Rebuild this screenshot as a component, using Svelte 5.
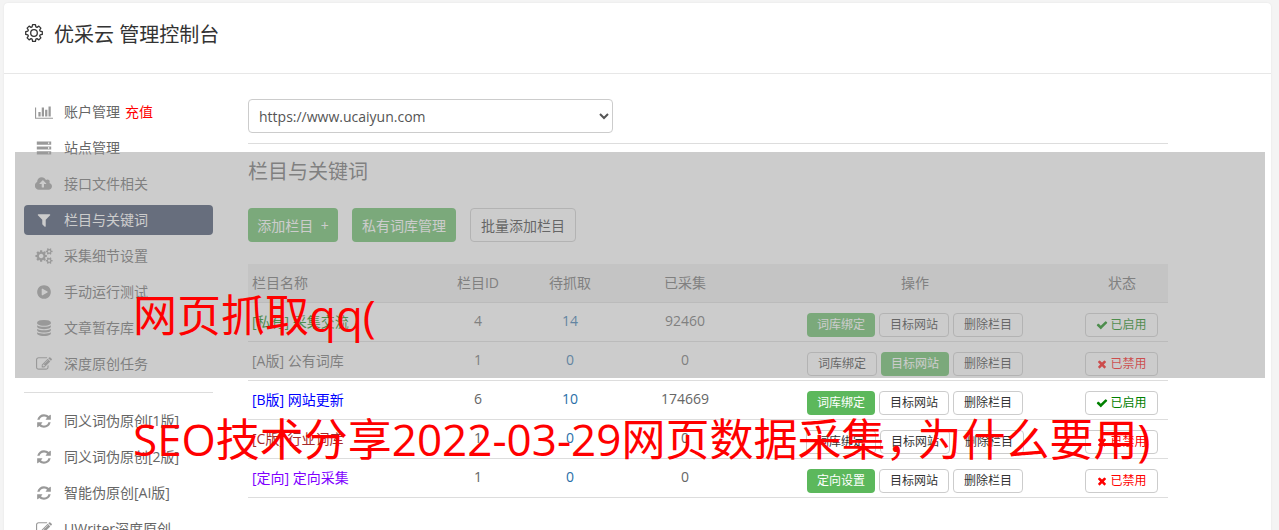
<script>
  const icons = {
    chart: { vb: '0 0 2048 1792', d: 'M640 896v512h-256v-512h256zm384-512v1024h-256v-1024h256zm1024 1152v128h-2048v-1280h128v1152h1920zm-640-896v768h-256v-768h256zm384-384v1152h-256v-1152h256z' },
    server: { vb: '0 0 20 20', d: 'M1 2h18v4H1zM15 3.2v1.6h1.6V3.2zM1 8h18v4H1zM15 9.2v1.6h1.6V9.2zM1 14h18v4H1zM15 15.2v1.6h1.6v-1.6z' },
    cloud: { vb: '0 0 1920 1792', d: 'M1216 864q0-14-9-23l-352-352q-9-9-23-9t-23 9l-351 351q-10 12-10 24 0 14 9 23t23 9h224v352q0 13 9.5 22.5t22.5 9.5h192q13 0 22.5-9.5t9.5-22.5v-352h224q13 0 22.5-9.5t9.5-22.5zm640 288q0 159-112.5 271.5t-271.5 112.5h-1088q-185 0-316.5-131.5t-131.5-316.5q0-130 70-240t188-165q-2-30-2-43 0-212 150-362t362-150q156 0 285.5 87t188.5 231q71-62 166-62 106 0 181 75t75 181q0 76-41 138 130 31 213.5 135.5t83.5 238.5z' },
    filter: { vb: '0 0 1792 1792', d: 'M1595 295q17 41-14 70l-493 493v742q0 42-39 59-13 5-25 5-27 0-45-19l-256-256q-19-19-19-45v-486l-493-493q-31-29-14-70 17-39 59-39h1280q42 0 59 39z' },
    cogs: { vb: '0 0 1920 1792', d: 'M896 896q0-106-75-181t-181-75-181 75-75 181 75 181 181 75 181-75 75-181zm768 512q0-52-38-90t-90-38-90 38-38 90q0 53 37.5 90.5t90.5 37.5 90.5-37.5 37.5-90.5zm0-1024q0-52-38-90t-90-38-90 38-38 90q0 53 37.5 90.5t90.5 37.5 90.5-37.5 37.5-90.5zm-384 421v185q0 10-7 19.5t-16 10.5l-155 24q-11 35-32 76 34 48 90 115 7 11 7 20 0 12-7 19-23 30-82.5 89.5t-78.5 59.5q-11 0-21-7l-115-90q-37 19-77 31-11 108-23 155-7 24-30 24h-186q-11 0-20-7.5t-10-17.5l-23-153q-34-10-75-31l-118 89q-7 7-20 7-11 0-21-8-144-133-144-160 0-9 7-19 10-14 41-53t47-61q-23-44-35-82l-152-24q-10-1-17-9.5t-7-19.5v-185q0-10 7-19.5t16-10.5l155-24q11-35 32-76-34-48-90-115-7-11-7-20 0-12 7-20 22-30 82-89t79-59q11 0 21 7l115 90q34-18 77-32 11-108 23-154 7-24 30-24h186q11 0 20 7.5t10 17.5l23 153q34 10 75 31l118-89q8-7 20-7 11 0 21 8 144 133 144 160 0 8-7 19-12 16-42 54t-45 60q23 48 34 82l152 23q10 2 17 10.5t7 19.5zm640 533v140q0 16-149 31-12 27-30 52 51 113 51 138 0 4-4 7-122 71-124 71-8 0-46-47t-52-68q-20 2-30 2t-30-2q-14 21-52 68t-46 47q-2 0-124-71-4-3-4-7 0-25 51-138-18-25-30-52-149-15-149-31v-140q0-16 149-31 13-29 30-52-51-113-51-138 0-4 4-7 4-2 35-20t59-34 30-16q8 0 46 46.5t52 67.5q20-2 30-2t30 2q51-71 92-112l6-2q4 0 124 70 4 3 4 7 0 25-51 138 17 23 30 52 149 15 149 31zm0-1024v140q0 16-149 31-12 27-30 52 51 113 51 138 0 4-4 7-122 71-124 71-8 0-46-47t-52-68q-20 2-30 2t-30-2q-14 21-52 68t-46 47q-2 0-124-71-4-3-4-7 0-25 51-138-18-25-30-52-149-15-149-31v-140q0-16 149-31 13-29 30-52-51-113-51-138 0-4 4-7 4-2 35-20t59-34 30-16q8 0 46 46.5t52 67.5q20-2 30-2t30 2q51-71 92-112l6-2q4 0 124 70 4 3 4 7 0 25-51 138 17 23 30 52 149 15 149 31z' },
    play: { vb: '0 0 1792 1792', d: 'M896 128q209 0 385.5 103t279.5 279.5 103 385.5-103 385.5-279.5 279.5-385.5 103-385.5-103-279.5-279.5-103-385.5 103-385.5 279.5-279.5 385.5-103zm384 823q32-18 32-55t-32-55l-544-320q-31-19-64-1-32 19-32 56v640q0 37 32 56 16 8 32 8 17 0 32-9z' },
    database: { vb: '0 0 1792 1792', d: 'M896 768q237 0 443-43t325-127v170q0 69-103 128t-280 93.5-385 34.5-385-34.5-280-93.5-103-128v-170q119 84 325 127t443 43zm0 768q237 0 443-43t325-127v170q0 69-103 128t-280 93.5-385 34.5-385-34.5-280-93.5-103-128v-170q119 84 325 127t443 43zm0-384q237 0 443-43t325-127v170q0 69-103 128t-280 93.5-385 34.5-385-34.5-280-93.5-103-128v-170q119 84 325 127t443 43zm0-1152q208 0 385 34.5t280 93.5 103 128v128q0 69-103 128t-280 93.5-385 34.5-385-34.5-280-93.5-103-128v-128q0-69 103-128t280-93.5 385-34.5z' },
    edit: { vb: '0 0 1792 1792', d: 'M888 1184l116-116-152-152-116 116v56h96v96h56zm440-720q-16-16-33 1l-350 350q-17 17-1 33t33-1l350-350q17-17 1-33zm80 594v190q0 119-84.5 203.5t-203.5 84.5h-832q-119 0-203.5-84.5t-84.5-203.5v-832q0-119 84.5-203.5t203.5-84.5h832q63 0 117 25 15 7 18 23 3 17-9 29l-49 49q-14 14-32 8-23-6-45-6h-832q-66 0-113 47t-47 113v832q0 66 47 113t113 47h832q66 0 113-47t47-113v-126q0-13 9-22l64-64q15-15 35-7t20 29zm-96-738l288 288-672 672h-288v-288zm444 132l-92 92-288-288 92-92q28-28 68-28t68 28l152 152q28 28 28 68t-28 68z' },
    refresh: { vb: '0 0 1792 1792', d: 'M1639 1056q0 5-1 7-64 268-268 434.5t-478 166.5q-146 0-282.5-55t-243.5-157l-129 129q-19 19-45 19t-45-19-19-45v-448q0-26 19-45t45-19h448q26 0 45 19t19 45-19 45l-137 137q71 66 161 102t187 36q134 0 250-65t186-179q11-17 53-117 8-23 30-23h192q13 0 22.5 9.5t9.5 22.5zm25-800v448q0 26-19 45t-45 19h-448q-26 0-45-19t-19-45 19-45l138-138q-148-137-349-137-134 0-250 65t-186 179q-11 17-53 117-8 23-30 23h-199q-13 0-22.5-9.5t-9.5-22.5v-7q65-268 270-434.5t480-166.5q146 0 284 55.5t245 156.5l130-129q19-19 45-19t45 19 19 45z' },
    check: { vb: '0 0 1792 1792', d: 'M1671 566q0 40-28 68l-724 724-136 136q-28 28-68 28t-68-28l-136-136-362-362q-28-28-28-68t28-68l136-136q28-28 68-28t68 28l294 295 656-657q28-28 68-28t68 28l136 136q28 28 28 68z' },
    times: { vb: '0 0 1792 1792', d: 'M1490 1322q0 40-28 68l-136 136q-28 28-68 28t-68-28l-294-294-294 294q-28 28-68 28t-68-28l-136-136q-28-28-28-68t28-68l294-294-294-294q-28-28-28-68t28-68l136-136q28-28 68-28t68 28l294 294 294-294q28-28 68-28t68 28l136 136q28 28 28 68t-28 68l-294 294 294 294q28 28 28 68z' }
  };

  const topNav = [
    { icon: 'chart', label: '账户管理', extra: '充值' },
    { icon: 'server', label: '站点管理' },
    { icon: 'cloud', label: '接口文件相关' },
    { icon: 'filter', label: '栏目与关键词', active: true },
    { icon: 'cogs', label: '采集细节设置' },
    { icon: 'play', label: '手动运行测试' },
    { icon: 'database', label: '文章暂存库' },
    { icon: 'edit', label: '深度原创任务' }
  ];
  const toolNav = [
    { icon: 'refresh', label: '同义词伪原创[1版]' },
    { icon: 'refresh', label: '同义词伪原创[2版]' },
    { icon: 'refresh', label: '智能伪原创[AI版]' },
    { icon: 'edit', label: 'UWriter深度原创' }
  ];

  const rows = [
    { name: '[私有] 采集交流', color: '#008000', id: 4, wait: 14, done: 92460, first: '词库绑定', green: 0, on: true },
    { name: '[A版] 公有词库', color: '#666', id: 1, wait: 0, done: 0, first: '词库绑定', green: 1, on: false },
    { name: '[B版] 网站更新', color: '#0000ff', id: 6, wait: 10, done: 174669, first: '词库绑定', green: 0, on: true },
    { name: '[C版] 行业词库', color: '#a52a2a', id: 1, wait: 0, done: 0, first: '词库绑定', green: -1, on: false },
    { name: '[定向] 定向采集', color: '#8000ff', id: 1, wait: 0, done: 0, first: '定向设置', green: 0, on: false }
  ];

  // outline of the 8-toothed gear in the page title
  const gearPoints = [];
  for (let i = 0; i < 8; i++) {
    const a = (i * Math.PI) / 4;
    for (const [off, r] of [[-0.3, 6.4], [-0.17, 8.4], [0.17, 8.4], [0.3, 6.4]]) {
      gearPoints.push(`${(10 + r * Math.sin(a + off)).toFixed(2)},${(10 - r * Math.cos(a + off)).toFixed(2)}`);
    }
  }
  const gear = gearPoints.join(' ');
</script>

{#snippet icon(name, cls)}
  <svg class={cls} viewBox={icons[name].vb} aria-hidden="true"><path d={icons[name].d} fill="currentColor" fill-rule={name === 'server' ? 'evenodd' : 'nonzero'} /></svg>
{/snippet}

{#snippet navItem(item)}
  <li class="nav-item" class:active={item.active}>
    <span class="nav-icon">{@render icon(item.icon, 'nav-svg')}</span>
    <span class="nav-label">{item.label}</span>
    {#if item.extra}<span class="nav-label extra">{item.extra}</span>{/if}
  </li>
{/snippet}

<div class="panel">
  <header class="head">
    <svg class="gear" viewBox="0 0 20 20" aria-hidden="true">
      <polygon points={gear} fill="none" stroke="currentColor" stroke-width="1.3" stroke-linejoin="round" />
      <circle cx="10" cy="10" r="3.3" fill="none" stroke="currentColor" stroke-width="1.3" />
    </svg>
    <h1>优采云 管理控制台</h1>
  </header>

  <div class="body">
    <aside class="side">
      <ul>
        {#each topNav as item}
          {@render navItem(item)}
        {/each}
      </ul>
      <div class="divider"></div>
      <ul>
        {#each toolNav as item}
          {@render navItem(item)}
        {/each}
      </ul>
    </aside>

    <main class="main">
      <select class="site">
        <option>https://www.ucaiyun.com</option>
      </select>
      <div class="rule"></div>
      <h2>栏目与关键词</h2>
      <div class="actions">
        <button class="btn green wide">添加栏目 &nbsp;+</button>
        <button class="btn green">私有词库管理</button>
        <button class="btn">批量添加栏目</button>
      </div>

      <table>
        <thead>
          <tr>
            <th class="name">栏目名称</th>
            <th>栏目ID</th>
            <th>待抓取</th>
            <th>已采集</th>
            <th>操作</th>
            <th>状态</th>
          </tr>
        </thead>
        <tbody>
          {#each rows as row}
            <tr>
              <td class="name" style="color: {row.color}">{row.name}</td>
              <td>{row.id}</td>
              <td class="wait">{row.wait}</td>
              <td>{row.done}</td>
              <td class="ctl">
                <div class="ops">
                  <button class="btn small" class:green={row.green === 0}>{row.first}</button>
                  <button class="btn small" class:green={row.green === 1}>目标网站</button>
                  <button class="btn small">删除栏目</button>
                </div>
              </td>
              <td class="ctl">
                <button class="btn small status" class:on={row.on} class:off={!row.on}>
                  {@render icon(row.on ? 'check' : 'times', 'state-svg')}
                  已{row.on ? '启' : '禁'}用
                </button>
              </td>
            </tr>
          {/each}
        </tbody>
      </table>
    </main>
  </div>
</div>

<div class="veil"></div>
<div class="headline">
  <div>网页抓取qq(</div>
  <div>SEO技术分享2022-03-29网页数据采集<span class="comma">，</span>为什么要用)</div>
</div>

<style>
  :global(html), :global(body) {
    overflow: hidden;
    height: 100%;
  }
  :global(body) {
    background: #f4f4f4;
    font-family: "Open Sans", "Noto Sans CJK SC", sans-serif;
    font-size: 14px;
    color: #666;
  }

  .panel {
    margin: 3px 8px 0 4px;
    background: #fff;
    border-radius: 4px;
    box-shadow: 0 0 2px rgba(0, 0, 0, 0.08);
  }

  .head {
    height: 60px;
    border-bottom: 1px solid #e7e7e7;
    display: flex;
    align-items: center;
    gap: 10px;
    padding: 0 20px 10px;
    color: #333;
  }
  .gear {
    width: 20px;
    height: 20px;
    margin-bottom: 1px;
  }
  h1 {
    margin: 0;
    font-size: 20px;
    font-weight: 400;
    color: #333;
  }

  .body {
    display: flex;
    gap: 35px;
    padding-left: 20px;
  }

  .side {
    width: 189px;
    padding-top: 23px;
    flex: none;
  }
  .side ul {
    list-style: none;
    margin: 0;
    padding: 0;
  }
  .nav-item {
    height: 30px;
    margin-bottom: 6px;
    display: flex;
    align-items: center;
    color: #666;
    border-radius: 4px;
  }
  .nav-item:last-child {
    margin-bottom: 0;
  }
  .nav-item.active {
    background: #354361;
    color: #fff;
  }
  .nav-label {
    padding-bottom: 2px;
  }
  .nav-icon {
    width: 40px;
    display: flex;
    justify-content: center;
    color: #999;
  }
  .active .nav-icon {
    color: #fff;
  }
  .nav-svg {
    width: 18px;
    height: 16px;
  }
  .extra {
    color: #f00;
    margin-left: 5px;
  }
  .divider {
    border-top: 1px solid #ddd;
    margin: 13px 0;
  }

  .main {
    width: 920px;
    flex: none;
    padding-top: 25px;
  }
  .site {
    display: block;
    width: 365px;
    height: 34px;
    padding: 0 6px;
    font: inherit;
    color: #555;
    background: #fff;
    border: 1px solid #ccc;
    border-radius: 4px;
  }
  .rule {
    border-top: 1px solid #ddd;
    margin-top: 10px;
  }
  h2 {
    margin: 14px 0 22px;
    font-size: 20px;
    line-height: 28px;
    font-weight: 400;
    color: #666;
  }
  .actions {
    display: flex;
    gap: 14px;
    margin-bottom: 22px;
  }

  .btn {
    height: 34px;
    padding: 0 10px;
    font: inherit;
    color: #333;
    background: #fff;
    border: 1px solid #ccc;
    border-radius: 4px;
    white-space: nowrap;
  }
  .btn.green {
    color: #fff;
    background: #5cb85c;
    border: 0;
  }
  .btn.wide {
    width: 90px;
    padding: 0;
  }
  .btn.small {
    height: 24px;
    font-size: 12px;
    line-height: 22px;
  }
  .status {
    width: 73px;
    margin-left: -1px;
    padding: 0;
    display: inline-flex;
    align-items: center;
    justify-content: center;
    gap: 2px;
  }
  .status.on {
    color: #008000;
  }
  .status.off {
    color: #f00;
  }
  .state-svg {
    width: 12px;
    height: 12px;
    flex: none;
  }

  table {
    width: 920px;
    table-layout: fixed;
    border-collapse: collapse;
  }
  th:nth-child(1) { width: 184px; }
  th:nth-child(2) { width: 92px; }
  th:nth-child(3) { width: 92px; }
  th:nth-child(4) { width: 138px; }
  th:nth-child(5) { width: 322px; }
  th:nth-child(6) { width: 92px; }

  tr {
    height: 39px;
    border-bottom: 1px solid #ddd;
  }
  thead tr {
    height: 38.5px;
    background: #eee;
  }
  th, td {
    padding: 0 0 3px;
    text-align: center;
    font-weight: 400;
    color: #666;
    box-sizing: border-box;
  }
  .name {
    text-align: left;
    padding-left: 4px;
  }
  .wait {
    color: #2a6fa8;
  }
  .ctl {
    padding: 5px 0 0;
  }
  .ops {
    display: flex;
    justify-content: center;
    gap: 4px;
  }

  .veil {
    position: absolute;
    left: 15px;
    top: 152px;
    width: 1250px;
    height: 226px;
    background: #999;
    opacity: 0.5;
  }
  .headline {
    position: absolute;
    left: 133px;
    top: 253px;
    font-size: 44px;
    line-height: 124px;
    color: #f00;
    white-space: nowrap;
  }
  .comma {
    letter-spacing: -12px;
  }
</style>
